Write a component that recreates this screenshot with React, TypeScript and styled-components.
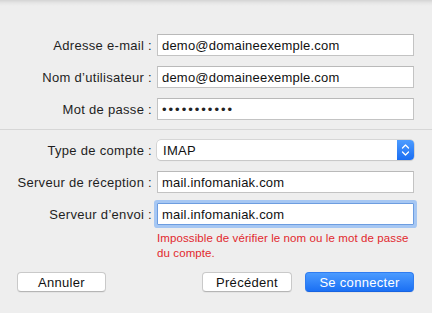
import React from "react";
import styled, { createGlobalStyle, css } from "styled-components";

const GlobalStyle = createGlobalStyle`
  html, body {
    margin: 0;
    padding: 0;
    background: #eeeeee;
  }
  body {
    font-family: "Liberation Sans", Arial, sans-serif;
    -webkit-font-smoothing: antialiased;
  }
`;

const Window = styled.div`
  width: 432px;
  height: 313px;
  box-sizing: border-box;
  padding-top: 34px;
  background: linear-gradient(#d4d4d4 0px, #e6e6e6 3px, #eeeeee 6px);
  display: flex;
  flex-direction: column;
  overflow: hidden;
`;

const FormGrid = styled.div`
  display: grid;
  grid-template-columns: 135px 257px;
  grid-auto-rows: 22px;
  column-gap: 5px;
  row-gap: 10px;
  padding: 0 18px 0 17px;
`;

const Label = styled.label`
  font-size: 13px;
  letter-spacing: 0.3px;
  color: #1e1e1e;
  text-align: right;
  white-space: nowrap;
  align-self: center;
`;

const Field = styled.div<{ $focused?: boolean }>`
  height: 22px;
  box-sizing: border-box;
  background: #ffffff;
  border: 1px solid #c3c3c3;
  border-top-color: #b9b9b9;
  padding: 0 4px;
  display: flex;
  align-items: center;
  font-size: 13px;
  letter-spacing: 0.2px;
  color: #111111;
  white-space: nowrap;
  ${(p) =>
    p.$focused &&
    css`
      border-color: #6d9de0;
      border-radius: 1px;
      box-shadow: 0 0 0 3px #a6c7f3;
    `}
`;

const Dots = styled.span`
  font-size: 13px;
  letter-spacing: 2px;
  color: #222222;
  padding-top: 1px;
`;

const Divider = styled.hr`
  margin: 9px 0 9px;
  border: 0;
  height: 1px;
  background: #d6d6d6;
`;

const Select = styled.div`
  align-self: center;
  height: 20px;
  box-sizing: border-box;
  background: #ffffff;
  border-radius: 4px;
  box-shadow: 0 0 0 0.5px #bdbdbd, 0 1px 1px rgba(0, 0, 0, 0.12);
  display: flex;
  align-items: center;
  overflow: hidden;
  font-size: 13px;
  letter-spacing: 0.3px;
  color: #111111;
`;

const SelectValue = styled.span`
  flex: 1;
  padding-left: 6px;
`;

const Stepper = styled.div`
  width: 17px;
  height: 100%;
  background: linear-gradient(#4d9cff, #1a6ef3);
  display: flex;
  align-items: center;
  justify-content: center;
`;

const ErrorText = styled.p`
  margin: 6px 0 0 157px;
  font-size: 11.5px;
  letter-spacing: 0.1px;
  line-height: 15px;
  color: #e2282d;
`;

const ButtonBar = styled.div`
  margin-top: 11px;
  padding: 0 18px 0 17px;
  display: flex;
  align-items: center;
`;

const Button = styled.button<{ $primary?: boolean; $width: number }>`
  width: ${(p) => p.$width}px;
  height: 20px;
  padding: 0;
  border-radius: 4px;
  font-family: inherit;
  font-size: 13px;
  letter-spacing: 0.3px;
  background: #ffffff;
  color: #111111;
  border: 1px solid #c9c9c9;
  border-bottom-color: #b5b5b5;
  box-shadow: 0 1px 0 rgba(0, 0, 0, 0.04);
  ${(p) =>
    p.$primary &&
    css`
      background: linear-gradient(#4b9bff, #1b70f4);
      color: #ffffff;
      border: 1px solid #2f7cf0;
      border-bottom-color: #1763e0;
    `}
`;

const Spacer = styled.div`
  flex: 1;
`;

const Gap = styled.div`
  width: 13px;
`;

const Chevrons = () => (
  <svg width="9" height="14" viewBox="0 0 9 14" fill="none">
    <path d="M1.5 5 L4.5 2 L7.5 5" stroke="#fff" strokeWidth="1.3" strokeLinecap="round" strokeLinejoin="round" />
    <path d="M1.5 9 L4.5 12 L7.5 9" stroke="#fff" strokeWidth="1.3" strokeLinecap="round" strokeLinejoin="round" />
  </svg>
);

const App: React.FC = () => (
  <>
    <GlobalStyle />
    <Window>
      <FormGrid>
        <Label>Adresse e-mail :</Label>
        <Field>demo@domaineexemple.com</Field>
        <Label>Nom d’utilisateur :</Label>
        <Field>demo@domaineexemple.com</Field>
        <Label>Mot de passe :</Label>
        <Field>
          <Dots>•••••••••••</Dots>
        </Field>
      </FormGrid>
      <Divider />
      <FormGrid>
        <Label>Type de compte :</Label>
        <Select>
          <SelectValue>IMAP</SelectValue>
          <Stepper>
            <Chevrons />
          </Stepper>
        </Select>
        <Label>Serveur de réception :</Label>
        <Field>mail.infomaniak.com</Field>
        <Label>Serveur d’envoi :</Label>
        <Field $focused>mail.infomaniak.com</Field>
      </FormGrid>
      <ErrorText>
        Impossible de vérifier le nom ou le mot de passe
        <br />
        du compte.
      </ErrorText>
      <ButtonBar>
        <Button $width={89}>Annuler</Button>
        <Spacer />
        <Button $width={90}>Précédent</Button>
        <Gap />
        <Button $width={109} $primary>
          Se connecter
        </Button>
      </ButtonBar>
    </Window>
  </>
);

export default App;
